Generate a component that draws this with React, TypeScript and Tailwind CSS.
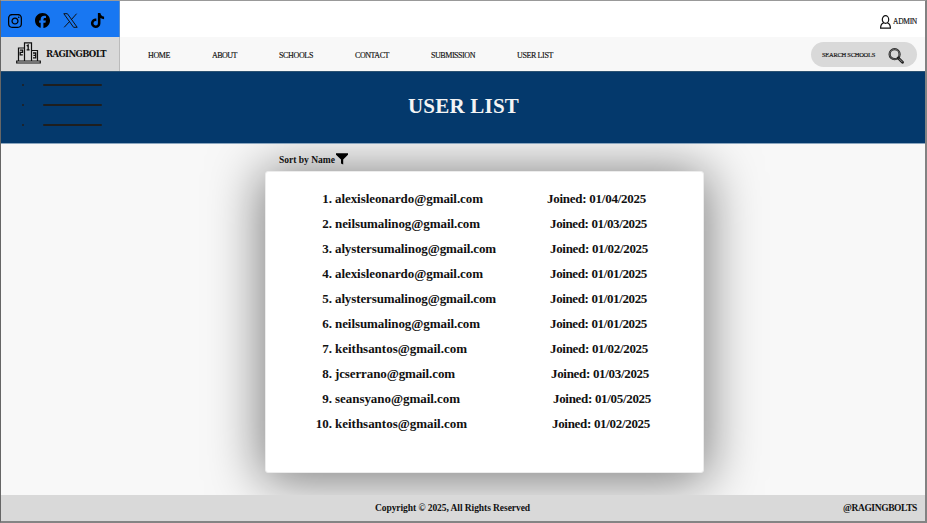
import { useLayoutEffect, useRef, useState } from "react";
import { FaFacebook, FaTiktok, FaInstagram } from "react-icons/fa6";

type FitProps = { text: string; width: number; className?: string };

/* A single line of text whose tracking is adjusted to fill the given width. */
function Fit({ text, width, className = "" }: FitProps) {
  const ref = useRef<HTMLSpanElement>(null);
  const [spacing, setSpacing] = useState(0);
  useLayoutEffect(() => {
    if (!ref.current) return;
    const natural = ref.current.getBoundingClientRect().width - spacing * text.length;
    setSpacing((width - natural) / text.length);
  }, [text, width]);
  return (
    <span className={`block shrink-0 whitespace-nowrap ${className}`} style={{ width }}>
      <span ref={ref} className="inline-block" style={{ letterSpacing: `${spacing}px` }}>
        {text}
      </span>
    </span>
  );
}

const users = [
  { email: "alexisleonardo@gmail.com", width: 148, date: "01/04/2025", pad: "pl-[212px]", dw: 99 },
  { email: "neilsumalinog@gmail.com", width: 145, date: "01/03/2025", pad: "pl-[215px]", dw: 97 },
  { email: "alystersumalinog@gmail.com", width: 161, date: "01/02/2025", pad: "pl-[215px]", dw: 98 },
  { email: "alexisleonardo@gmail.com", width: 148, date: "01/01/2025", pad: "pl-[215px]", dw: 97 },
  { email: "alystersumalinog@gmail.com", width: 161, date: "01/01/2025", pad: "pl-[215px]", dw: 97 },
  { email: "neilsumalinog@gmail.com", width: 145, date: "01/01/2025", pad: "pl-[215px]", dw: 97 },
  { email: "keithsantos@gmail.com", width: 132, date: "01/02/2025", pad: "pl-[215px]", dw: 98 },
  { email: "jcserrano@gmail.com", width: 120, date: "01/03/2025", pad: "pl-[216px]", dw: 98 },
  { email: "seansyano@gmail.com", width: 125, date: "01/05/2025", pad: "pl-[218px]", dw: 98 },
  { email: "keithsantos@gmail.com", width: 132, date: "01/02/2025", pad: "pl-[217px]", dw: 98 },
];

function PodiumLogo() {
  return (
    <svg className="h-[22px] w-[25px] shrink-0" viewBox="0 0 25 22" fill="none" stroke="#111" strokeWidth="1.2">
      <path d="M2.5 19V6h6M8.5 19V.8h7V19M15.5 8.5h6V19M.7 19h23.6v2H.7z" />
      <path d="M3.9 8.2h2.7v2.2H4.2v2.4h2.6M10.7 3.9l1.5-.8v4.6M10.6 7.8h3M17 11h2.7v4.8H17M17.4 13.3h2.2" strokeWidth="1.3" />
    </svg>
  );
}

function MenuLine() {
  return (
    <div className="flex h-0.5 items-center">
      <i className="ml-px h-0.5 w-0.5 bg-[#1a2430]" />
      <i className="ml-[19px] h-0.5 w-[59px] rounded-[1px] bg-[#1e1e1e]" />
    </div>
  );
}

export default function App() {
  return (
    <div className="flex h-[523px] w-[927px] flex-col overflow-hidden border-t border-r-2 border-b-2 border-l border-t-[#999] border-r-[#828282] border-b-[#848484] border-l-[#666] bg-[#f8f8f8] font-['Liberation_Serif',serif] text-[#111]">
      <header className="relative z-10 shrink-0">
        <div className="flex h-9 bg-white">
          <div className="flex w-[119px] items-center gap-[13px] border-r border-[#5b8fce] bg-[#1877f2] pt-[3px] pl-[6px] text-black">
            <FaInstagram className="size-4 shrink-0" />
            <FaFacebook className="-ml-px size-[15px] shrink-0" />
            <svg className="size-[15px] shrink-0" viewBox="0 0 15 15" fill="none" stroke="#111" strokeWidth="1">
              <path d="M.8.7h3.6l9.8 13.6h-3.6zM13.6.7 8.2 6.8M6.4 8.7l-5.2 5.6" />
            </svg>
            <FaTiktok className="-ml-px size-[15px] shrink-0" />
          </div>
          <div className="ml-auto flex items-center gap-[2px] pt-[5px] pr-2">
            <svg className="h-[14px] w-[11px]" viewBox="0 0 11 14" fill="none" stroke="#111" strokeWidth="1.2">
              <ellipse cx="5.5" cy="4.5" rx="3.2" ry="3.8" />
              <path d="M3.7 7.8C1.5 8.4.6 9.5.6 13.2h9.8c0-3.7-.9-4.8-3.1-5.4" />
            </svg>
            <Fit text="ADMIN" width={24} className="text-[7.5px] [-webkit-text-stroke:0.15px_#111]" />
          </div>
        </div>
        <div className="flex h-[34px] items-center bg-[#f8f8f8]">
          <div className="flex h-full w-[119px] items-center gap-[5px] border-r border-[#bbb] bg-[#d9d9d9] pl-[15px]">
            <div className="-mt-[3px]"><PodiumLogo /></div>
            <Fit text="RAGINGBOLT" width={60} className="pt-px font-['DejaVu_Serif',serif] text-[8.5px] font-bold" />
          </div>
          <nav className="flex items-center pt-[3px] pl-7 text-[8px] leading-3 [-webkit-text-stroke:0.15px_#111]">
            <Fit text="HOME" width={22} />
            <Fit text="ABOUT" width={25} className="ml-[42px] pt-px" />
            <Fit text="SCHOOLS" width={34} className="ml-[42px]" />
            <Fit text="CONTACT" width={34} className="ml-[42px]" />
            <Fit text="SUBMISSION" width={44} className="ml-[42px]" />
            <Fit text="USER LIST" width={36} className="ml-[42px]" />
          </nav>
          <div className="mr-2 ml-auto flex h-[25px] w-[106px] items-center rounded-full bg-[#d9d9d9] pt-px pl-[11px]">
            <Fit text="SEARCH SCHOOLS" width={53} className="text-[6.5px] [-webkit-text-stroke:0.15px_#111]" />
            <svg className="mt-0.5 ml-[13px] size-4" viewBox="0 0 16 16" fill="none" stroke="#222">
              <circle cx="6.6" cy="6.2" r="5" strokeWidth="2.2" />
              <circle cx="6.6" cy="6.2" r="5" stroke="#999" strokeWidth=".6" />
              <path d="m10.2 10 4.3 4.2" strokeWidth="2.8" strokeLinecap="round" />
              <path d="m11 10.7 3.3 3.3" stroke="#aaa" strokeWidth=".8" />
            </svg>
          </div>
        </div>
        <div className="flex h-[73px] border-y border-t-[#2c5272] border-b-[#8ba6bf] bg-[#04396c]">
          <div className="flex w-[407px] flex-col gap-[18px] pt-[12px] pl-5">
            <MenuLine />
            <MenuLine />
            <MenuLine />
          </div>
          <h1 className="pt-[20px] text-[21px] leading-7 font-bold text-[#f4f4f4]">
            <Fit text="USER LIST" width={111} />
          </h1>
        </div>
      </header>

      <main className="h-[351px] shrink-0">
        <div className="flex h-[27px] pl-[278px]">
          <div className="relative z-10 flex items-center gap-px pt-[6px]">
            <Fit text="Sort by Name" width={56} className="text-[9.5px] font-bold" />
            <svg className="-mt-[3px] h-3 w-3" viewBox="0 0 12 12" fill="#000">
              <path d="M0 .3h12v1.4L7.2 6.4V11.5l-2.2-1V6.4L0 1.7z" />
            </svg>
          </div>
        </div>
        <section className="ml-[264px] h-[302px] w-[439px] rounded-[3px] border border-[#ececec] bg-white pt-[14px] shadow-[0_4px_52px_4px_rgba(0,0,0,0.5)]">
          <ol className="text-[13px] font-bold">
            {users.map((u, i) => (
              <li key={i} className="flex h-[25px] items-center">
                <span className="w-[66px] text-right">{i + 1}.</span>
                <div className="grid pl-[3px]">
                  <Fit text={u.email} width={u.width} className="col-start-1 row-start-1" />
                  <div className={`col-start-1 row-start-1 ${u.pad}`}>
                    <Fit text={`Joined: ${u.date}`} width={u.dw} />
                  </div>
                </div>
              </li>
            ))}
          </ol>
        </section>
      </main>

      <footer className="relative z-10 flex h-[26px] shrink-0 items-center bg-[#d9d9d9] pt-px pl-[374px] font-bold">
        <Fit text="Copyright © 2025, All Rights Reserved" width={155} className="text-[9.5px]" />
        <Fit text="@RAGINGBOLTS" width={74} className="mr-[8px] ml-auto text-[9.5px]" />
      </footer>
    </div>
  );
}
